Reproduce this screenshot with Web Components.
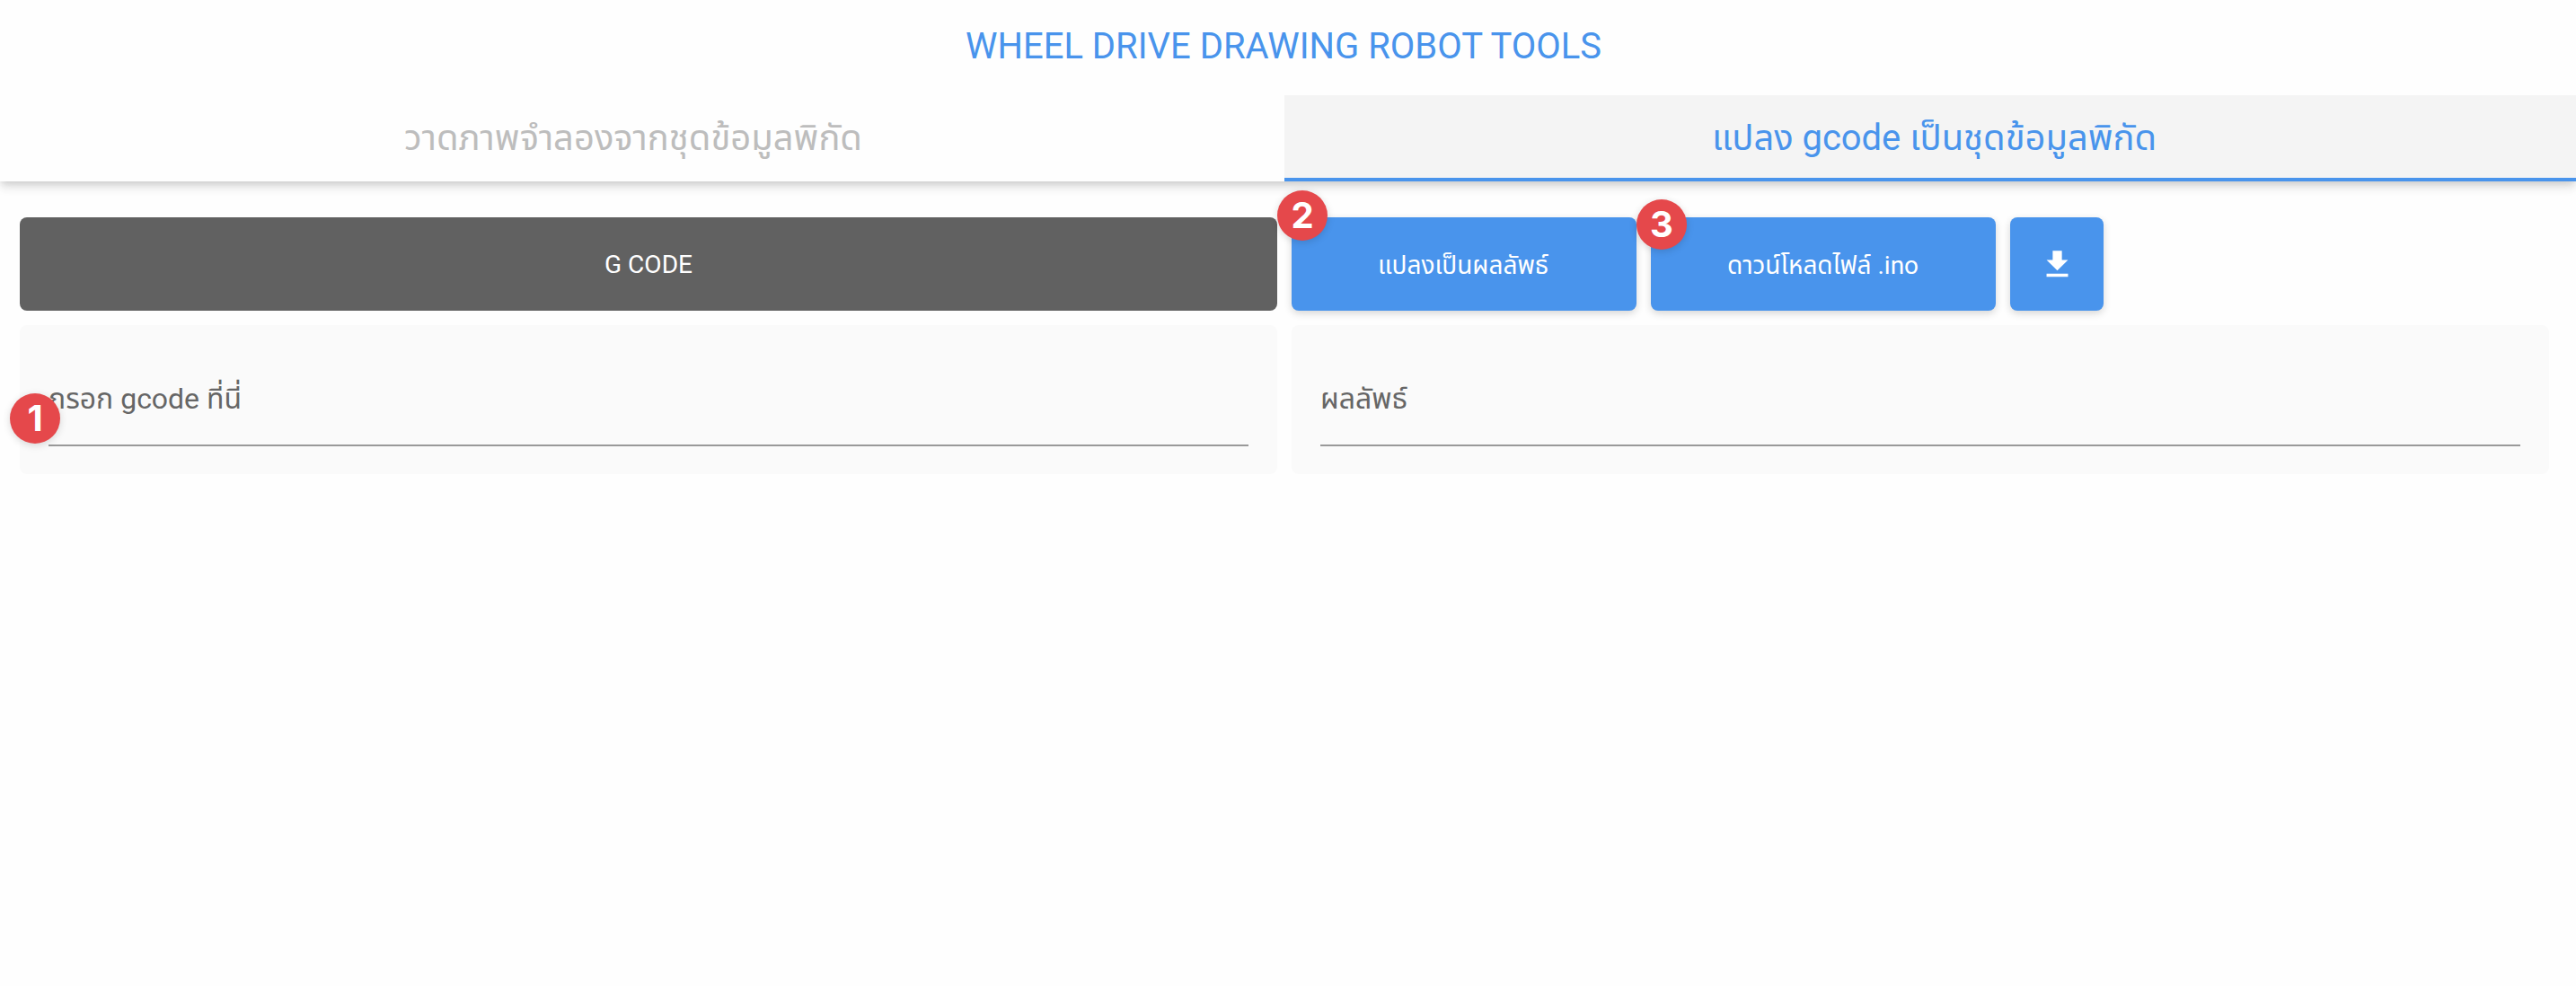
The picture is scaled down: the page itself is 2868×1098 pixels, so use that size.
<!DOCTYPE html>
<html lang="th"><head><meta charset="utf-8"><title>Wheel Drive Drawing Robot Tools</title>
<style>
body{margin:0;background:#fefefe;font-family:Roboto,"Noto Sans Thai","IBM Plex Sans Thai","Noto Sans",sans-serif;height:1098px;overflow:hidden;--blue:#4994ec}
</style></head><body>
<robot-app></robot-app>
<script>
const define=(name,html,setup)=>customElements.define(name,class extends HTMLElement{
  constructor(){super();const t=document.createElement('template');t.innerHTML=html;
    this.attachShadow({mode:'open'}).append(t.content.cloneNode(true));}
  connectedCallback(){if(setup)setup(this);}
});
/* Label whose glyphs are scaled to fill the given width. */
define('fit-label',`<style>:host{display:inline-block;white-space:nowrap}span{display:inline-block;transform-origin:0 50%}</style><span><slot></slot></span>`,el=>{
  const w=+el.getAttribute('w');if(!w)return;
  const s=el.shadowRoot.querySelector('span');
  const r=s.getBoundingClientRect().width;
  if(r){s.style.transform='scaleX('+w/r+')';el.style.width=w+'px';}
});
define('app-title',`<style>:host{display:flex;justify-content:center;align-items:center;height:106px;box-sizing:border-box;padding:0 10px 4px 0;font-size:40px;color:var(--blue)}</style><slot></slot>`);
define('tab-bar',`<style>:host{display:flex;height:96px;background:#fefefe;box-shadow:0 4px 8px -2px rgba(0,0,0,.13),0 8px 10px rgba(0,0,0,.07),0 2px 20px rgba(0,0,0,.04);clip-path:inset(0 0 -40px 0)}</style><slot></slot>`);
define('tab-item',`<style>:host{display:flex;flex:1 1 1430px;align-items:center;justify-content:center;box-sizing:border-box;font-size:40px;color:#bdbdbd;padding:2px 20px 0 0}:host([active]){flex-basis:1438px;padding:6px 0 0 8px;background:#f4f4f4;color:var(--blue);border-bottom:4px solid var(--blue)}</style><slot></slot>`);
define('step-badge',`<style>:host{position:absolute;z-index:2;display:flex;align-items:center;justify-content:center;width:56px;height:56px;border-radius:50%;background:#e5484b;color:#fff;font:700 40px/56px Inter,sans-serif;box-shadow:0 2px 8px rgba(0,0,0,.15)}</style><slot></slot>`);
define('app-button',`<style>:host{position:relative;display:flex;align-items:center;justify-content:center;box-sizing:border-box;width:384px;height:104px;padding:4px 2px 0 0;border-radius:8px;background:var(--blue);color:#fff;font-size:28px;box-shadow:0 3px 8px rgba(0,0,0,.16)}:host([dark]){width:auto;padding:0;background:#616161;box-shadow:none}:host([icon]){width:104px;padding:0}svg{display:block}</style><slot></slot>`);
define('text-card',`<style>:host{position:relative;display:block;box-sizing:border-box;height:166px;border-radius:8px;background:#fafafa;padding:57px 32px 31px;font-size:32px;color:#666}div{box-sizing:border-box;height:78px;border-bottom:2px solid #999;line-height:50px}</style><div><slot></slot></div><slot name="badge"></slot>`);
define('robot-app',`<style>:host{display:block}main{display:grid;grid-template-columns:1400px 1400px;gap:16px;padding:40px 22px}.row{display:flex;gap:16px}svg{display:block}</style>
<app-title><fit-label w="708">WHEEL DRIVE DRAWING ROBOT TOOLS</fit-label></app-title>
<tab-bar><tab-item><fit-label w="510">วาดภาพจำลองจากชุดข้อมูลพิกัด</fit-label></tab-item><tab-item active><fit-label w="495">แปลง gcode เป็นชุดข้อมูลพิกัด</fit-label></tab-item></tab-bar>
<main>
<app-button dark><fit-label w="98">G CODE</fit-label></app-button>
<div class="row"><app-button><fit-label w="190">แปลงเป็นผลลัพธ์</fit-label><step-badge style="left:-16px;top:-30.5px">2</step-badge></app-button>
<app-button><fit-label w="213">ดาวน์โหลดไฟล์ .ino</fit-label><step-badge style="left:-16px;top:-20px">3</step-badge></app-button>
<app-button icon><svg width="41" height="41" viewBox="0 0 24 24" fill="#fff"><path d="M19 9h-4V3H9v6H5l7 7 7-7zM5 18v2h14v-2H5z"/></svg></app-button></div>
<text-card><fit-label w="215">กรอก gcode ที่นี่</fit-label><step-badge slot="badge" style="left:-11px;top:76px">1</step-badge></text-card>
<text-card><fit-label w="97">ผลลัพธ์</fit-label></text-card>
</main>`);
</script></body></html>
